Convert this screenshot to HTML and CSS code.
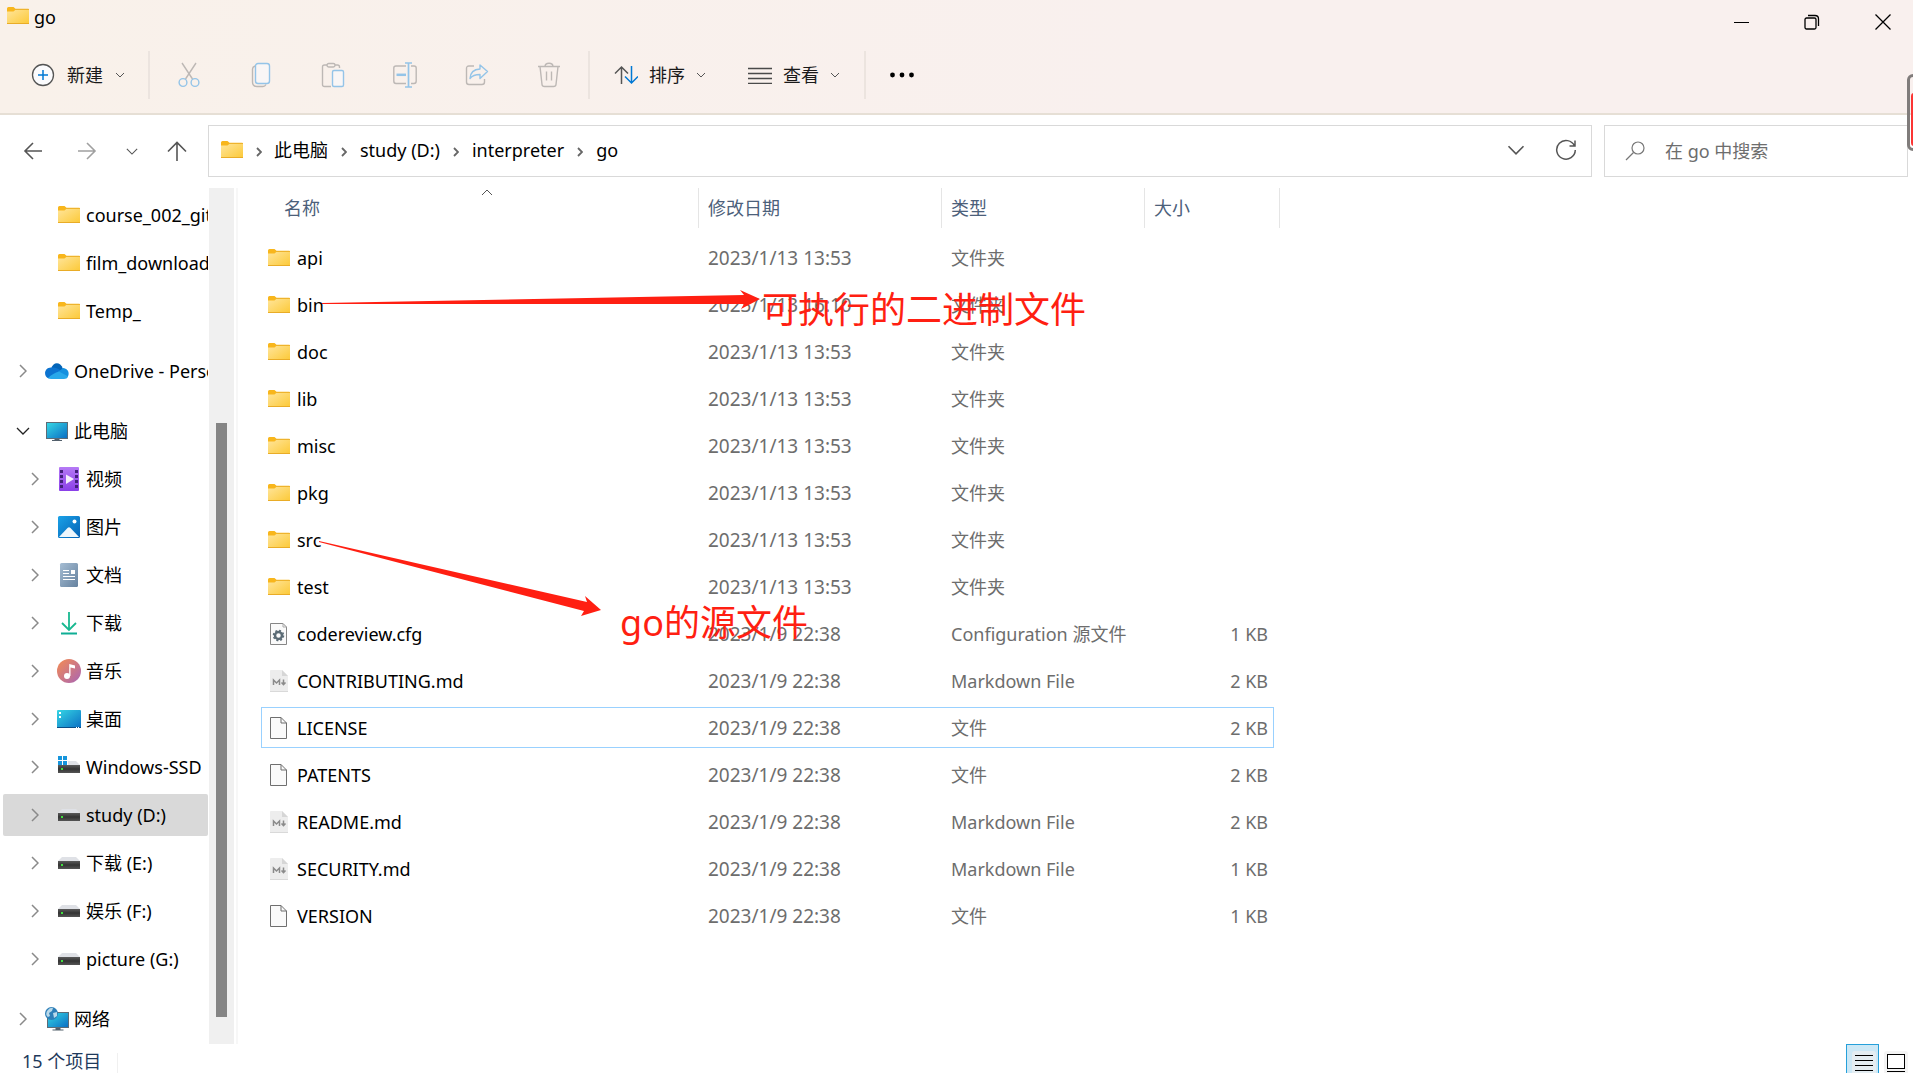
FILE: index.html
```html
<!DOCTYPE html>
<html lang="zh-CN">
<head>
<meta charset="utf-8">
<title>go</title>
<link rel="stylesheet" href="styles.css">
</head>
<body>
<svg class="defs" aria-hidden="true">
  <defs>
    <linearGradient id="gf" x1="0" y1="0" x2="1" y2="1"><stop offset="0" stop-color="#ffe59b"/><stop offset="1" stop-color="#fcc937"/></linearGradient>
    <linearGradient id="gs" x1="0" y1="0" x2="1" y2="1"><stop offset="0" stop-color="#35d6e4"/><stop offset="1" stop-color="#0b6fc4"/></linearGradient>
    <linearGradient id="gv" x1="0" y1="0" x2="0" y2="1"><stop offset="0" stop-color="#b57af5"/><stop offset="1" stop-color="#8a3fe8"/></linearGradient>
    <linearGradient id="gp" x1="0" y1="0" x2="1" y2="1"><stop offset="0" stop-color="#1aa2e8"/><stop offset="1" stop-color="#0561b4"/></linearGradient>
    <linearGradient id="gd" x1="0" y1="0" x2="1" y2="1"><stop offset="0" stop-color="#a5bdd3"/><stop offset="1" stop-color="#66829f"/></linearGradient>
    <linearGradient id="gm" x1="0" y1="0" x2="1" y2="1"><stop offset="0" stop-color="#f58c51"/><stop offset="1" stop-color="#a865b5"/></linearGradient>
    <linearGradient id="gk" x1="0" y1="0" x2="0" y2="1"><stop offset="0" stop-color="#5a5a5a"/><stop offset=".5" stop-color="#333"/><stop offset="1" stop-color="#555"/></linearGradient>
  </defs>
  <symbol id="folder" viewBox="0 0 22 18"><path d="M0 1.5Q0 0 1.500 0H6.500L8.500 1.700H21.500V5H0Z" fill="#f8b61c"/><path d="M0 4.500H6.500L8.500 2.700H22V17H0Z" fill="url(#gf)"/><path d="M8 2.500H22" stroke="#eeb32d"/><path d="M0 16.500H22" stroke="#e9ac27"/></symbol>
  <symbol id="right" viewBox="0 0 8 14"><path d="M1 1L7 7L1 13" fill="none" stroke="#8a8a8a" stroke-width="1.500"/></symbol>
  <symbol id="down" viewBox="0 0 14 8"><path d="M1 1L7 7L13 1" fill="none" stroke="currentColor" stroke-width="1.300"/></symbol>
  <symbol id="crumb" viewBox="0 0 6 10"><path d="M1 1L5 5L1 9" fill="none" stroke="#666" stroke-width="1.800"/></symbol>
  <symbol id="small" viewBox="0 0 10 6"><path d="M1 1L5 5L9 1" fill="none" stroke="#555"/></symbol>
  <symbol id="cloud" viewBox="0 0 24 24"><path d="M6 10C8 3 15 2 18 10L18 15L6 15Z" fill="#0364b8"/><path d="M6 8.500C-1 8.500-2 18 4 19.500L17 12.500C13 9 10 8 6 8.500Z" fill="#0c73d0"/><path d="M13 13L18 9C24 9.500 25 16 22 18.500L17 17Z" fill="#1490df"/><path d="M3 19Q4.500 20 6 20H19Q22 20 23.200 17.500L14 12.500Q8 14 3 19Z" fill="#28a8ea"/></symbol>
  <symbol id="pc" viewBox="0 0 24 24"><path d="M1 3H23V20H1Z" fill="#5c6b77"/><path d="M2 4H22V19H2Z" fill="url(#gs)"/><path d="M9.500 20H14.500V21H17V22H7V21H9.500Z" fill="#53606b"/></symbol>
  <symbol id="video" viewBox="0 0 24 24"><rect x="2" width="20" height="24" rx="1" fill="url(#gv)"/><path d="M3 3h3v3H3zM3 8h3v3H3zM3 13h3v3H3zM3 18h3v3H3zM18 3h3v3h-3zM18 8h3v3h-3zM18 13h3v3h-3zM18 18h3v3h-3z" fill="#44207c"/><path d="M9 7.500L17 12L9 17Z" fill="#f5effc"/></symbol>
  <symbol id="photo" viewBox="0 0 24 24"><rect x="1" y="1" width="22" height="22" rx="1.500" fill="url(#gp)"/><circle cx="17.500" cy="6.500" r="2" fill="#fff"/><path d="M2 22L10.500 13Q12 11.500 13.500 13L22 22Z" fill="#eef6fc"/></symbol>
  <symbol id="doc" viewBox="0 0 24 24"><rect x="3" width="18" height="24" rx="1.500" fill="url(#gd)"/><path d="M6 7.500H12M6 10.500H12M6 13.500H18M6 16.500H18" stroke="#fff"/><rect x="14" y="7" width="4" height="4" fill="#fff"/></symbol>
  <symbol id="dl" viewBox="0 0 24 24"><path d="M12 1V19M5 12L12 19L19 12" fill="none" stroke="#18b890" stroke-width="1.800"/><path d="M4 22.500H20" stroke="#0fae95" stroke-width="2"/></symbol>
  <symbol id="music" viewBox="0 0 24 24"><circle cx="12" cy="12" r="12" fill="url(#gm)"/><circle cx="10" cy="17" r="3" fill="#fff"/><path d="M12.200 17V5L18 6.500V9.500L13.500 8.500V17Z" fill="#fff"/></symbol>
  <symbol id="desk" viewBox="0 0 24 24"><rect y="3" width="24" height="18" rx="1" fill="url(#gs)"/><path d="M2 5h2v2H2zM2 9h2v2H2z" fill="#fff"/><path d="M0 20.500H24" stroke="#0a4d86"/><path d="M19 20.500h1M21 20.500h1" stroke="#fff"/></symbol>
  <symbol id="drive" viewBox="0 0 24 24"><path d="M5 6H19L23 10H1Z" fill="#dfe1e6"/><rect x="1" y="10" width="22" height="8" fill="url(#gk)"/><rect x="4" y="13" width="2" height="2" fill="#3fe03f"/></symbol>
  <symbol id="ssd" viewBox="0 0 24 24"><path d="M5 6H19L23 10H1Z" fill="#dfe1e6"/><rect x="1" y="10" width="22" height="8" fill="url(#gk)"/><rect x="4" y="13" width="2" height="2" fill="#3fe03f"/><path d="M0 0H11V10H0Z" fill="#fff"/><path d="M1 1h4v4H1zM6 1h4v4H6zM1 6h4v4H1zM6 6h4v4H6z" fill="#1695dc"/></symbol>
  <symbol id="net" viewBox="0 0 24 24"><path d="M2 5H24V21H2Z" fill="#5c6b77"/><path d="M3 6H23V20H3Z" fill="url(#gs)"/><path d="M10.500 21h5v1.500h3v1h-11v-1h3Z" fill="#53606b"/><circle cx="6.500" cy="6.500" r="6.500" fill="#2e7fb8"/><path d="M2 4Q5 0 8 1L7 4L4 6L5 9L3 10Q0 8 2 4ZM8 6L12 5V9L9 11Z" fill="#b9d9ea"/></symbol>
  <symbol id="file" viewBox="0 0 22 24"><path d="M2.500 1.500H13L18.500 7V22.500H2.500Z" fill="#fafafa" stroke="#6f6f6f"/><path d="M13 1.500V7H18.500" fill="none" stroke="#6f6f6f"/></symbol>
  <symbol id="cfg" viewBox="0 0 22 24"><path d="M2.500 1.500H15L18.500 5V22.500H2.500Z" fill="#fafafa" stroke="#868686"/><path d="M15 1.500V5H18.500" fill="none" stroke="#aaa"/><circle cx="10.500" cy="13.500" r="3.500" fill="none" stroke="#5b6b75" stroke-width="2.500"/><circle cx="10.500" cy="13.500" r="5" fill="none" stroke="#5b6b75" stroke-width="1.500" stroke-dasharray="2 1.927"/></symbol>
  <symbol id="md" viewBox="0 0 22 24"><path d="M3 1H14L20 7V22Q20 23 19 23H3Q2 23 2 22V2Q2 1 3 1Z" fill="#ededed"/><path d="M14 1V7H20Z" fill="#d6d6d6"/><path d="M2 22.500H20" stroke="#d9d9d9"/><path d="M5.500 16V11L8.500 14L11.500 11V16M15.500 10.500V15.500M13.500 13.500L15.500 15.700L17.500 13.500" fill="none" stroke="#8b8b8b" stroke-width="1.500"/></symbol>
</svg>

<div class="window">
  <header class="top">
    <div class="titlebar">
      <div class="title"><svg class="fold"><use href="#folder"/></svg><span>go</span></div>
      <div class="controls">
        <button aria-label="最小化"><svg width="16" height="16"><path d="M0 8.500H15" stroke="#000"/></svg></button>
        <button aria-label="向下还原"><svg width="16" height="16" fill="none" stroke="#000" stroke-width="1.300"><rect x="1" y="4" width="11" height="11" rx="1.500"/><path d="M4 1.500H11Q14.500 1.500 14.500 5V12"/></svg></button>
        <button aria-label="关闭"><svg width="16" height="16"><path d="M.5 .5L15.500 15.500M15.500 .5L.5 15.500" stroke="#000" stroke-width="1.300"/></svg></button>
      </div>
    </div>
    <div class="toolbar">
      <button class="cmd new"><svg width="24" height="24" fill="none"><circle cx="12" cy="12" r="10.500" fill="#fbfbfd" stroke="#555" stroke-width="1.300"/><path d="M12 7V17M7 12H17" stroke="#0078d4" stroke-width="1.500"/></svg><span>新建</span><svg class="sm"><use href="#small"/></svg></button>
      <span class="sep"></span>
      <div class="tools">
        <button aria-label="剪切"><svg width="24" height="26" fill="none" stroke-width="1.400"><path d="M5 1L15.500 17M19 1L8.500 17" stroke="#bdb8b5"/><circle cx="6" cy="20.500" r="3.900" stroke="#94c4e8"/><circle cx="18" cy="20.500" r="3.900" stroke="#94c4e8"/></svg></button>
        <button aria-label="复制"><svg width="24" height="26" fill="none" stroke-width="1.400"><path d="M6 4Q3.500 5 3.500 7V20Q3.500 24.500 8 24.500H14Q16 24.500 17 22.500" stroke="#bdb8b5"/><rect x="6.500" y="1.500" width="14" height="20" rx="2.500" fill="#f9f6f6" stroke="#94c4e8"/></svg></button>
        <button aria-label="粘贴"><svg width="24" height="26" fill="none" stroke-width="1.400"><path d="M10 24.500H3.500Q1.500 24.500 1.500 22.500V5Q1.500 3 3.500 3H6M14 3H16.500Q18.500 3 18.500 5V6" stroke="#bdb8b5"/><rect x="6" y="1.500" width="8" height="3.500" rx="1.700" stroke="#bdb8b5"/><rect x="11.500" y="8.500" width="11" height="16" rx="1.500" fill="#f9f6f6" stroke="#94c4e8"/></svg></button>
        <button aria-label="重命名"><svg width="24" height="26" fill="none" stroke-width="1.400"><path d="M13 4H3Q.8 4 .8 6V19Q.8 21.500 3 21.500H13M18 4H21Q23.200 4 23.200 6V19Q23.200 21.500 21 21.500H18" stroke="#bdb8b5"/><path d="M15.500 1V25M12 1H19M12 25H19" stroke="#94c4e8" stroke-width="1.700"/><path d="M3.500 12.800H13" stroke="#94c4e8" stroke-width="2.500"/></svg></button>
        <button aria-label="共享"><svg width="24" height="26" fill="none" stroke-width="1.400"><path d="M9 4H4Q1.500 4 1.500 6.500V20Q1.500 22.500 4 22.500H17Q19.500 22.500 19.500 20V17" stroke="#bdb8b5"/><path d="M15 3L22.500 9.500L15 16.500V12.500Q8 12.500 5 16.500Q5.500 7.500 15 7Z" stroke="#94c4e8" stroke-linejoin="round"/></svg></button>
        <button aria-label="删除"><svg width="24" height="26" fill="none" stroke="#bdb8b5" stroke-width="1.400"><path d="M1 4.500H23M8 4.500Q8 1.300 12 1.300T16 4.500M3 4.500L5 22.500Q5.200 24.500 7.500 24.500H16.500Q18.800 24.500 19 22.500L21 4.500M9.500 9.500V18.500M14.500 9.500V18.500"/></svg></button>
      </div>
      <span class="sep"></span>
      <button class="cmd"><svg width="24" height="20" fill="none" stroke-width="1.500"><path d="M7.500 19V2M1 8.500L7.500 2L14 8.500" stroke="#555"/><path d="M17.500 1V18M11 11.500L17.500 18L24 11.500" stroke="#0078d4"/></svg><span>排序</span><svg class="sm"><use href="#small"/></svg></button>
      <button class="cmd view"><svg width="24" height="18"><path d="M0 2.500H24M0 7.500H24M0 12.500H24M0 17.500H24" stroke="#4a4a4a" stroke-width="1.300"/></svg><span>查看</span><svg class="sm"><use href="#small"/></svg></button>
      <span class="sep"></span>
      <button class="more" aria-label="更多"><svg width="24" height="6"><circle cx="2.500" cy="3" r="2.400"/><circle cx="12" cy="3" r="2.400"/><circle cx="21.500" cy="3" r="2.400"/></svg></button>
    </div>
  </header>

  <nav class="address">
    <div class="history">
      <button aria-label="后退"><svg width="20" height="20" fill="none" stroke="#555" stroke-width="1.600"><path d="M19 10H2M10 2L2 10L10 18"/></svg></button>
      <button aria-label="前进"><svg width="20" height="20" fill="none" stroke="#a0a0a0" stroke-width="1.600"><path d="M1 10H18M10 2L18 10L10 18"/></svg></button>
      <button class="recent" aria-label="最近浏览的位置"><svg width="12" height="7"><use href="#down"/></svg></button>
      <button aria-label="上移"><svg width="20" height="20" fill="none" stroke="#555" stroke-width="1.600"><path d="M10 20V2M1 10.500L10 1.500L19 10.500"/></svg></button>
    </div>
    <div class="path">
      <svg class="fold"><use href="#folder"/></svg>
      <svg class="cr"><use href="#crumb"/></svg><a href="#">此电脑</a>
      <svg class="cr"><use href="#crumb"/></svg><a href="#">study (D:)</a>
      <svg class="cr"><use href="#crumb"/></svg><a href="#">interpreter</a>
      <svg class="cr"><use href="#crumb"/></svg><a href="#">go</a>
      <div class="pathend">
        <button aria-label="以前的位置"><svg width="18" height="10"><use href="#down"/></svg></button>
        <button aria-label="刷新"><svg width="22" height="22" fill="none" stroke="#555" stroke-width="1.500"><path d="M19.500 7A9.300 9.300 0 1 0 20.300 11M20 1.500V7H14.500"/></svg></button>
      </div>
    </div>
    <label class="search"><svg width="20" height="20" fill="none" stroke="#777" stroke-width="1.200"><circle cx="13" cy="7" r="6"/><path d="M8.500 11.500L1 19"/></svg><input type="text" placeholder="在 go 中搜索" aria-label="在 go 中搜索"></label>
  </nav>

  <div class="body">
    <aside class="side">
      <div class="tree">
        <a class="child" href="#"><i></i><svg class="fold"><use href="#folder"/></svg><span>course_002_git</span></a>
        <a class="child" href="#"><i></i><svg class="fold"><use href="#folder"/></svg><span>film_download</span></a>
        <a class="child" href="#"><i></i><svg class="fold"><use href="#folder"/></svg><span>Temp_</span></a>
        <a class="root" href="#"><svg class="arr"><use href="#right"/></svg><svg class="ic"><use href="#cloud"/></svg><span>OneDrive - Personal</span></a>
        <a class="root" href="#"><svg class="open"><use href="#down"/></svg><svg class="ic"><use href="#pc"/></svg><span>此电脑</span></a>
        <a class="child" href="#"><svg class="arr"><use href="#right"/></svg><svg class="ic"><use href="#video"/></svg><span>视频</span></a>
        <a class="child" href="#"><svg class="arr"><use href="#right"/></svg><svg class="ic"><use href="#photo"/></svg><span>图片</span></a>
        <a class="child" href="#"><svg class="arr"><use href="#right"/></svg><svg class="ic"><use href="#doc"/></svg><span>文档</span></a>
        <a class="child" href="#"><svg class="arr"><use href="#right"/></svg><svg class="ic"><use href="#dl"/></svg><span>下载</span></a>
        <a class="child" href="#"><svg class="arr"><use href="#right"/></svg><svg class="ic"><use href="#music"/></svg><span>音乐</span></a>
        <a class="child" href="#"><svg class="arr"><use href="#right"/></svg><svg class="ic"><use href="#desk"/></svg><span>桌面</span></a>
        <a class="child" href="#"><svg class="arr"><use href="#right"/></svg><svg class="ic"><use href="#ssd"/></svg><span>Windows-SSD</span></a>
        <a class="child current" href="#"><svg class="arr"><use href="#right"/></svg><svg class="ic"><use href="#drive"/></svg><span>study (D:)</span></a>
        <a class="child" href="#"><svg class="arr"><use href="#right"/></svg><svg class="ic"><use href="#drive"/></svg><span>下载 (E:)</span></a>
        <a class="child" href="#"><svg class="arr"><use href="#right"/></svg><svg class="ic"><use href="#drive"/></svg><span>娱乐 (F:)</span></a>
        <a class="child" href="#"><svg class="arr"><use href="#right"/></svg><svg class="ic"><use href="#drive"/></svg><span>picture (G:)</span></a>
        <a class="root" href="#"><svg class="arr"><use href="#right"/></svg><svg class="ic"><use href="#net"/></svg><span>网络</span></a>
      </div>
      <div class="track"><div class="thumb"></div></div>
    </aside>

    <main class="files">
      <table>
        <colgroup><col class="c1"><col class="c2"><col class="c3"><col class="c4"></colgroup>
        <thead><tr>
          <th><button class="first">名称<svg class="sort" width="12" height="7"><path d="M1 6L6 1L11 6" fill="none" stroke="#555"/></svg></button></th>
          <th><button>修改日期</button></th><th><button>类型</button></th><th><button class="last">大小</button></th>
        </tr></thead>
        <tbody>
          <tr><td><div><svg class="fold"><use href="#folder"/></svg>api</div></td><td>2023/1/13 13:53</td><td>文件夹</td><td></td></tr>
          <tr><td><div><svg class="fold"><use href="#folder"/></svg>bin</div></td><td>2023/1/13 16:10</td><td>文件夹</td><td></td></tr>
          <tr><td><div><svg class="fold"><use href="#folder"/></svg>doc</div></td><td>2023/1/13 13:53</td><td>文件夹</td><td></td></tr>
          <tr><td><div><svg class="fold"><use href="#folder"/></svg>lib</div></td><td>2023/1/13 13:53</td><td>文件夹</td><td></td></tr>
          <tr><td><div><svg class="fold"><use href="#folder"/></svg>misc</div></td><td>2023/1/13 13:53</td><td>文件夹</td><td></td></tr>
          <tr><td><div><svg class="fold"><use href="#folder"/></svg>pkg</div></td><td>2023/1/13 13:53</td><td>文件夹</td><td></td></tr>
          <tr><td><div><svg class="fold"><use href="#folder"/></svg>src</div></td><td>2023/1/13 13:53</td><td>文件夹</td><td></td></tr>
          <tr><td><div><svg class="fold"><use href="#folder"/></svg>test</div></td><td>2023/1/13 13:53</td><td>文件夹</td><td></td></tr>
          <tr><td><div><svg class="fi"><use href="#cfg"/></svg>codereview.cfg</div></td><td>2023/1/9 22:38</td><td>Configuration 源文件</td><td>1 KB</td></tr>
          <tr><td><div><svg class="fi"><use href="#md"/></svg>CONTRIBUTING.md</div></td><td>2023/1/9 22:38</td><td>Markdown File</td><td>2 KB</td></tr>
          <tr class="focus"><td><div><svg class="fi"><use href="#file"/></svg>LICENSE</div></td><td>2023/1/9 22:38</td><td>文件</td><td>2 KB</td></tr>
          <tr><td><div><svg class="fi"><use href="#file"/></svg>PATENTS</div></td><td>2023/1/9 22:38</td><td>文件</td><td>2 KB</td></tr>
          <tr><td><div><svg class="fi"><use href="#md"/></svg>README.md</div></td><td>2023/1/9 22:38</td><td>Markdown File</td><td>2 KB</td></tr>
          <tr><td><div><svg class="fi"><use href="#md"/></svg>SECURITY.md</div></td><td>2023/1/9 22:38</td><td>Markdown File</td><td>1 KB</td></tr>
          <tr><td><div><svg class="fi"><use href="#file"/></svg>VERSION</div></td><td>2023/1/9 22:38</td><td>文件</td><td>1 KB</td></tr>
        </tbody>
      </table>
    </main>
  </div>

  <footer class="status">
    <span class="count">15 个项目</span>
    <div class="modes">
      <button class="on" aria-label="详细信息"><svg width="24" height="24"><rect width="24" height="24" rx="3" fill="#e4edf2"/><path d="M3 4.500H21M3 9.500H21M3 14.500H21M3 19.500H21" stroke="#000"/></svg></button>
      <button aria-label="大图标"><svg width="24" height="24"><rect width="24" height="24" rx="3" fill="#f4f4f4"/><rect x="3.500" y="3.500" width="17" height="14" fill="#fff" stroke="#000"/><path d="M3 20.500H21" stroke="#000"/></svg></button>
    </div>
  </footer>

  <!-- notes drawn over the file list -->
  <svg class="arrows" width="800" height="640" aria-hidden="true"><path d="M322 303L744 295L740 290L760 299L741 309L744 304L322 304Z" fill="#ff1f12"/><path d="M319 541L587 602L585 596L601 610L581 616L584 611L319 542Z" fill="#ff1f12"/></svg>
  <p class="note bin">可执行的二进制文件</p>
  <p class="note src">go的源文件</p>
  <div class="dock"><div></div></div>
</div>
</body>
</html>
```
FILE: styles.css
```css
* { box-sizing: border-box; }
body {
  margin: 0;
  font: 18px/24px "Noto Sans", "Noto Sans CJK SC", sans-serif;
  color: #000;
  background: #fff;
}
button, input { font: inherit; color: inherit; border: 0; padding: 0; background: none; }
a { color: inherit; text-decoration: none; }
svg { display: block; flex: none; }
.defs { position: absolute; width: 0; height: 0; }

.window {
  position: relative;
  display: flex;
  flex-direction: column;
  height: 100vh;
  overflow: hidden;
}
.fold { width: 22px; height: 18px; }

.top {
  flex: none;
  background: linear-gradient(90deg, #f9f1ea, #f9f0ee 60%);
  border-bottom: 2px solid #e6dfd5;
}
.titlebar { display: flex; justify-content: space-between; height: 51px; }
.title { display: flex; align-items: center; gap: 5px; height: 34px; padding-left: 7px; }
.title .fold { margin-bottom: 2px; }
.controls { display: flex; height: 43px; }
.controls button { width: 70px; display: grid; place-items: center; }
.controls button:last-child { width: 66px; padding-left: 6px; }

.toolbar { display: flex; align-items: center; height: 62px; padding-bottom: 14px; }
.sep { width: 2px; height: 48px; background: #ece4df; }
.cmd { display: flex; align-items: center; gap: 11px; height: 48px; margin-left: 24px; color: #1a1a1a; }
.cmd.new { gap: 12px; margin-left: 31px; margin-right: 23px; }
.cmd.view { margin-left: 42px; margin-right: 24px; }
.sm { width: 10px; height: 6px; }
.tools { display: flex; gap: 24px; padding: 0 15px; }
.tools button { width: 48px; height: 48px; display: grid; place-items: center; }
.more { margin-left: 24px; }

.address { flex: none; display: flex; padding: 10px 5px 5px 0; height: 67px; }
.history { width: 208px; flex: none; display: flex; align-items: center; gap: 34px; padding-left: 23px; color: #555; }
.history .recent { margin: 0 -5px; }
.path {
  flex: 1;
  display: flex;
  align-items: center;
  padding: 0 14px 2px 12px;
  border: 1px solid #d9d9d9;
}
.cr { width: 6px; height: 10px; margin: 3px 12px 0 13px; }
.cr ~ .cr { margin: 3px 13px 0 13px; }
.pathend { display: flex; align-items: center; gap: 30px; margin-left: auto; color: #555; }
.search {
  width: 304px;
  margin-left: 12px;
  display: flex;
  align-items: center;
  gap: 20px;
  padding-left: 20px;
  border: 1px solid #d9d9d9;
}
.search input { flex: 1; min-width: 0; outline: 0; }
.search input::placeholder { color: #6d6d6d; opacity: 1; }

.body { flex: 1; min-height: 0; display: flex; }
.side { flex: none; width: 238px; display: flex; margin-top: 6px; border-right: 2px solid #f7f7f7; }
.tree { width: 209px; display: flex; flex-direction: column; gap: 6px; padding: 6px 1px 0 3px; overflow: hidden; }
.tree a {
  flex: none;
  display: flex;
  align-items: center;
  height: 42px;
  padding-left: 28px;
  border-radius: 2px;
  white-space: nowrap;
  overflow: hidden;
}
.tree a.root { padding-left: 16px; margin-top: 12px; }
.tree a.current { background: #d9d9d9; }
.arr { width: 8px; height: 14px; margin-right: 18px; }
.open { width: 14px; height: 8px; margin: 0 15px 0 -3px; color: #222; }
.tree i { flex: none; width: 27px; }
.tree .fold { margin-right: 6px; }
.ic { width: 24px; height: 24px; margin-right: 5px; }
.track { width: 25px; padding: 235px 7px 27px; background: #f0f0f0; }
.thumb { height: 100%; background: #858585; }

.files { flex: 1; padding-left: 23px; }
table { table-layout: fixed; width: 1013px; border-spacing: 0 6px; }
.c1 { width: 438px; }
.c2 { width: 243px; }
.c3 { width: 203px; }
.c4 { width: 129px; }
th { height: 43px; padding: 0; vertical-align: top; font-weight: 400; }
th button {
  position: relative;
  display: block;
  width: 100%;
  height: 40px;
  padding-left: 9px;
  text-align: left;
  color: #4c607a;
  border-right: 1px solid #e5e5e5;
}
th .first { padding-left: 23px; }
th .last { width: 135px; }
.sort { position: absolute; left: 220px; top: 1px; }
td {
  height: 41px;
  padding: 0 0 0 9px;
  border: solid transparent;
  border-width: 1px 0;
  color: #6d6d6d;
  white-space: nowrap;
}
td:first-child { padding-left: 6px; border-left-width: 1px; color: #000; }
td:nth-child(2) { font-size: 19px; }
td:last-child { padding-right: 5px; border-right-width: 1px; text-align: right; }
td div { display: flex; align-items: center; gap: 7px; }
.fi { width: 22px; height: 24px; }
.focus td { border-color: #99d1ff; }

.status { flex: none; display: flex; justify-content: space-between; height: 29px; color: #1e395b; }
.count {
  height: 34px;
  padding: 5px 17px 0 22px;
  background: linear-gradient(#f0f0f0, #f0f0f0) right 9px / 1px 100% no-repeat;
}
.modes { display: flex; gap: 5px; padding-right: 5px; color: #000; }
.modes button { height: 36px; padding-top: 1px; }
.modes .on { width: 33px; padding: 1px 0 0 5px; border: 1px solid #26a0da; background: #cce8f6; }

.arrows { position: absolute; left: 0; top: 0; pointer-events: none; }
.note { position: absolute; margin: 0; font-size: 36px; line-height: 48px; color: #ff1f12; white-space: nowrap; }
.note.bin { left: 762px; top: 286px; }
.note.src { left: 620px; top: 599px; }
.dock {
  position: absolute;
  right: -20px;
  top: 74px;
  width: 26px;
  height: 77px;
  padding: 16px 1px 2px;
  border: 3px solid #807c7b;
  border-radius: 6px;
}
.dock div { height: 100%; border-radius: 3px; background: #fb3534; }
```
